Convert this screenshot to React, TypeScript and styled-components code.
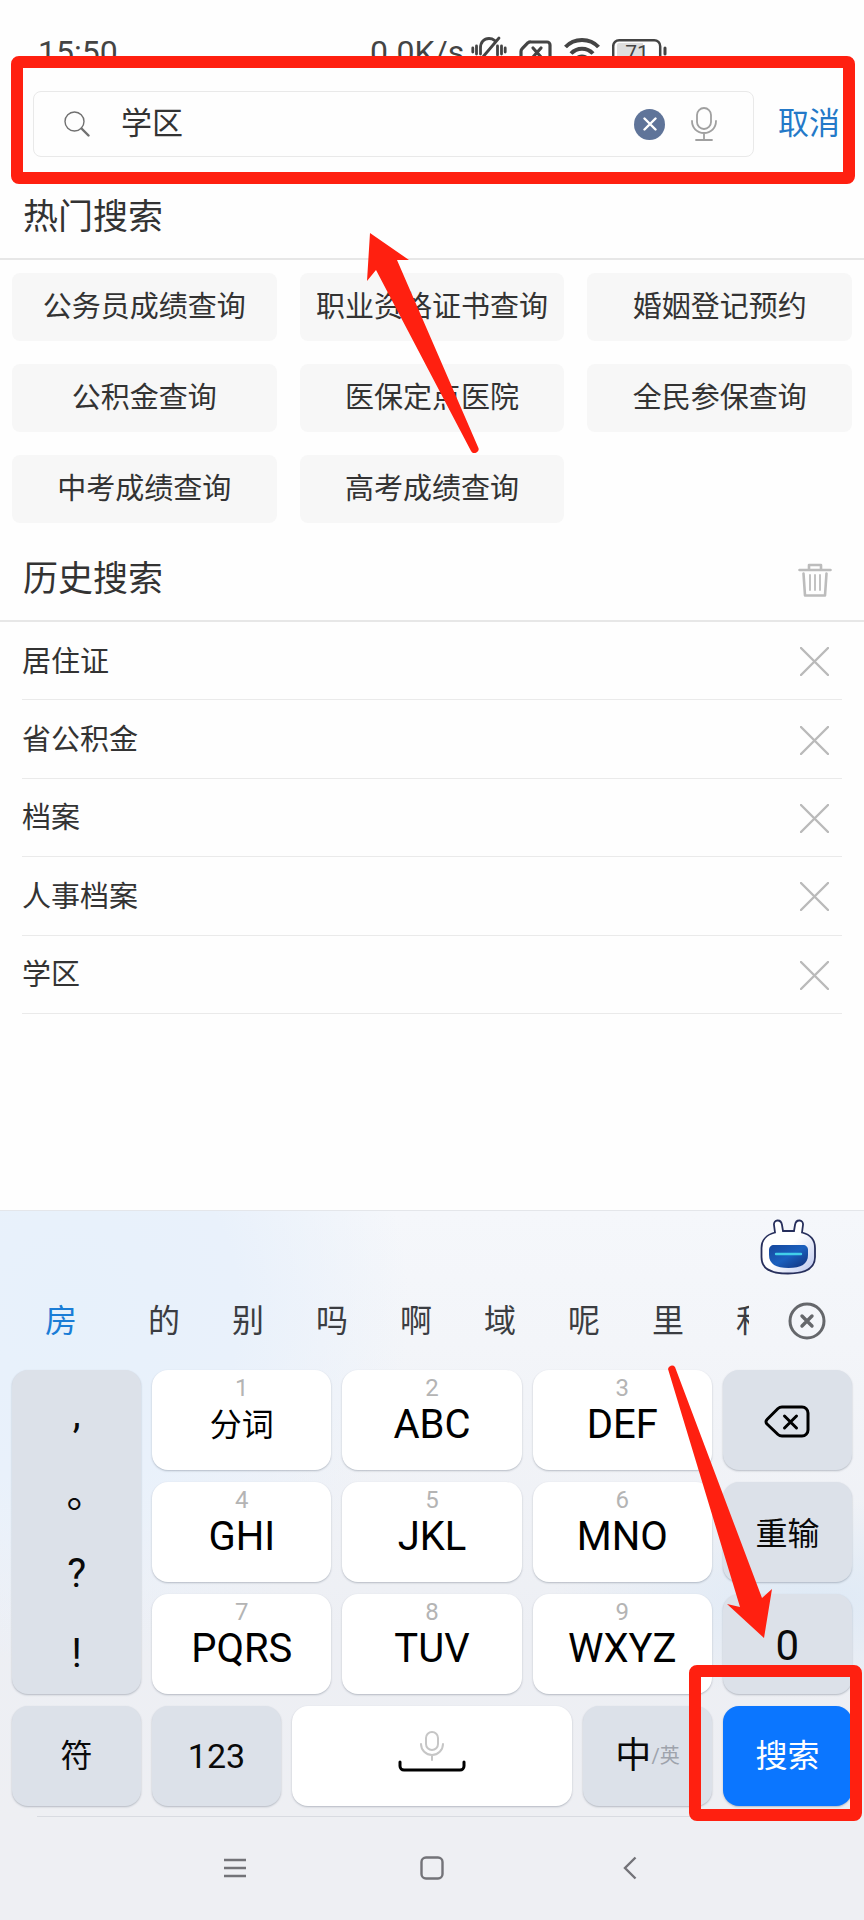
import React, { useState } from "react";
import styled, { createGlobalStyle } from "styled-components";

const RED = "#ff2010";

const GlobalStyle = createGlobalStyle`
  *, *::before, *::after { box-sizing: border-box; }
  body {
    margin: 0;
    background: #fefefe;
    color: #333;
    font-family: Roboto, "Noto Sans CJK SC", sans-serif;
  }
  button, input {
    margin: 0;
    padding: 0;
    border: 0;
    background: none;
    color: inherit;
    font: inherit;
  }
  button { cursor: pointer; }
  svg { display: block; flex: none; }
`;

const Screen = styled.div`
  display: flex;
  flex-direction: column;
  min-height: 100vh;
  overflow: hidden;
`;

/* ---------- status bar ---------- */

const StatusBar = styled.div`
  display: grid;
  grid-template-columns: 370fr 494fr;
  height: 56px;
  padding-top: 36px;
  color: #444;
  font-size: 32px;
  line-height: 32px;
`;

const Clock = styled.span`
  padding-left: 38px;
`;

const StatusIcons = styled.div`
  display: flex;
  align-items: flex-start;
  gap: 12px;
`;

const Speed = styled.span`
  width: 89px;
  white-space: nowrap;
`;

/* ---------- search ---------- */

const SearchHeader = styled.header`
  position: relative;
  display: flex;
  align-items: center;
  gap: 24px;
  padding: 35px 24px 27px 33px;
`;

const SearchBox = styled.label`
  display: flex;
  flex: 1;
  align-items: center;
  height: 66px;
  padding: 0 36px 0 30px;
  border: 1px solid #e9e9e9;
  border-radius: 8px;
`;

const SearchInput = styled.input`
  flex: 1;
  min-width: 0;
  padding: 0 30px 0 31px;
  outline: none;
  font-size: 31px;
  line-height: 40px;
`;

const ClearButton = styled.button`
  display: grid;
  place-items: center;
  width: 31px;
  height: 31px;
  margin-right: 26px;
  border-radius: 50%;
  background: #5f7499;
`;

const IconButton = styled.button`
  display: grid;
  place-items: center;
`;

const CancelButton = styled.button`
  color: #2479c8;
  font-size: 31px;
  line-height: 40px;
`;

const Highlight = styled.div<{ $inset: string }>`
  position: absolute;
  z-index: 2;
  inset: ${(p) => p.$inset};
  border: 12px solid ${RED};
  border-radius: 8px;
  pointer-events: none;
`;

const Arrow = styled.svg`
  position: absolute;
  z-index: 3;
  fill: ${RED};
  pointer-events: none;
`;

const HotArrow = styled(Arrow)`
  top: 49px;
  left: 366px;
`;

const KeyArrow = styled(Arrow)`
  top: 154px;
  right: 91px;
`;

/* ---------- sections ---------- */

const Section = styled.section`
  position: relative;
`;

const SectionHead = styled.div`
  display: flex;
  align-items: center;
  justify-content: space-between;
  padding: 0 32px 6px 23px;
  border-bottom: 2px solid #e7e7e7;
`;

const SectionTitle = styled.h2`
  margin: 0;
  font-size: 35px;
  font-weight: 400;
  line-height: 68px;
`;

const TagGrid = styled.div`
  display: grid;
  grid-template-columns: repeat(3, 1fr);
  gap: 23px;
  padding: 13px 12px 23px;
`;

const Tag = styled.button`
  height: 68px;
  border-radius: 8px;
  background: #f7f7f7;
  font-size: 29px;
  line-height: 40px;
  white-space: nowrap;
`;

const HistoryList = styled.ul`
  display: grid;
  grid-auto-rows: 1fr;
  min-height: 392px;
  margin: 0;
  padding: 0 22px;
  list-style: none;
`;

const HistoryRow = styled.li`
  display: flex;
  align-items: center;
  justify-content: space-between;
  padding: 2px 13px 0 0;
  border-bottom: 1px solid #eaeaea;
  font-size: 29px;
  line-height: 40px;
`;

/* ---------- keyboard ---------- */

const KeyboardArea = styled.div`
  margin-top: auto;
  background: #eeeff3;
`;

const Keyboard = styled.section`
  position: relative;
  border-top: 1px solid #e4e6ea;
  background:
    radial-gradient(ellipse 260px 100px at 94% 64%, #dfeaf6 0%, transparent 100%),
    radial-gradient(ellipse 340px 360px at 8% 16%, #e7f1fb 0%, #e9f1fb 50%, transparent 100%),
    linear-gradient(#f5f7fb 0%, #f3f5f9 22%, #edeff4 70%, #eeeff3 100%);
`;

const AssistantBar = styled.div`
  display: flex;
  justify-content: flex-end;
  height: 65px;
  padding: 7px 48px 0 0;
`;

const CandidateBar = styled.div`
  display: flex;
  align-items: center;
  height: 90px;
  padding-right: 38px;
`;

const Candidates = styled.div`
  display: flex;
  flex: 1;
  min-width: 0;
  margin-right: 39px;
  overflow: hidden;
`;

const Candidate = styled.button<{ $active?: boolean }>`
  flex: none;
  width: ${(p) => (p.$active ? 122 : 84)}px;
  color: ${(p) => (p.$active ? "#1a7dd6" : "#3b3d42")};
  font-size: 32px;
  line-height: 48px;
`;

const KeyRows = styled.div`
  display: grid;
  gap: 12px;
  padding: 4px 12px 10px;
`;

const MainKeys = styled.div`
  display: grid;
  grid-template-columns: 129fr 179fr 179fr 179fr 129fr;
  grid-auto-rows: 100px;
  gap: 12px 11px;
`;

const BottomKeys = styled.div`
  display: grid;
  grid-template-columns: 129fr 129fr 280fr 129fr 129fr;
  grid-auto-rows: 100px;
  gap: 11px;
`;

const keyTone = {
  white: { bg: "#fff", fg: "#000" },
  gray: { bg: "#dce1e9", fg: "#0a0a0a" },
  blue: { bg: "#0b76ff", fg: "#fff" },
};

const Key = styled.button<{ $tone: keyof typeof keyTone; $size?: number }>`
  display: flex;
  flex-direction: column;
  align-items: center;
  justify-content: center;
  width: 100%;
  height: 100%;
  border-radius: 16px;
  background: ${(p) => keyTone[p.$tone].bg};
  box-shadow: 0 1px 2px rgba(60, 70, 90, 0.32);
  color: ${(p) => keyTone[p.$tone].fg};
  font-size: ${(p) => p.$size ?? 32}px;
  line-height: 48px;
`;

const LetterKey = styled(Key)`
  justify-content: flex-start;
  padding-top: 6px;
`;

const SideKey = styled(Key)`
  padding-top: 4px;
`;

const SpaceKey = styled(Key)`
  gap: 0;
  padding-bottom: 8px;
`;

const Digit = styled.span`
  color: #b4b4b4;
  font-size: 24px;
  line-height: 24px;
`;

const Letters = styled.span`
  line-height: 50px;
`;

const PunctuationKeys = styled.div`
  display: grid;
  grid-row: span 3;
  grid-auto-rows: 1fr;
  padding-top: 4px;
  border-radius: 16px;
  background: #dce1e9;
  box-shadow: 0 1px 2px rgba(60, 70, 90, 0.32);
`;

const PunctuationKey = styled.button`
  color: #0a0a0a;
  font-size: 40px;
  line-height: 48px;
  font-feature-settings: "halt";
`;

const LanguageLabel = styled.span`
  display: flex;
  align-items: center;
`;

const LanguageAlt = styled.span`
  color: #9ea3ac;
  font-size: 20px;
`;

const KeyHolder = styled.div`
  position: relative;
`;

/* ---------- system navigation ---------- */

const NavBar = styled.nav`
  display: flex;
  justify-content: center;
  height: 104px;
  margin: 0 37px;
  padding-bottom: 2px;
  border-top: 1px solid #d9dbe1;
  color: #737378;
`;

const NavButton = styled.button`
  display: grid;
  place-items: center;
  width: 25%;
`;

/* ---------- icons ---------- */

const stroke = { fill: "none", strokeLinecap: "round", strokeLinejoin: "round" } as const;

const VibrateOffIcon = () => (
  <svg width="36" height="30" viewBox="0 0 36 30" {...stroke} stroke="#444" strokeWidth="2.8">
    <path d="M9.500 18V12C9.500 6 13 2.500 18 2.500c2 0 4 .6 5.500 1.800M26.500 10v9M11 22 28 2M1.800 12v4M5.500 10v8M30.500 10v8M34.200 12v4" />
    <path d="M12 24h15" />
  </svg>
);

const NoSimIcon = () => (
  <svg width="33" height="28" viewBox="0 0 33 28" {...stroke} stroke="#444" strokeWidth="3.2">
    <path d="M12 6h16a3 3 0 0 1 3 3v13a3 3 0 0 1-3 3H5a3 3 0 0 1-3-3v-6.500a4 4 0 0 1 1.200-2.800l5.800-6A4 4 0 0 1 12 6Z" />
    <path d="m14 12 8 9M22 12l-8 9" />
  </svg>
);

const WifiIcon = () => (
  <svg width="36" height="28" viewBox="0 0 36 28" fill="none" stroke="#444" strokeWidth="4">
    <path d="M1.500 11C10 1.500 26 1.500 34.500 11" />
    <path d="M7 17.500c6-6.500 16-6.500 22 0" />
    <path d="M12.500 23c3-3.500 8-3.500 11 0" />
  </svg>
);

const BatteryIcon = () => (
  <svg width="56" height="28" viewBox="0 0 56 28">
    <path d="M7 7h24v17H7a2 2 0 0 1-2-2V9a2 2 0 0 1 2-2Z" fill="#dedede" />
    <rect x="1.200" y="4.200" width="47" height="23" rx="6" fill="none" stroke="#444" strokeWidth="2.500" />
    <path d="M53 12v6" stroke="#444" strokeWidth="3" strokeLinecap="round" />
    <text x="25" y="24" textAnchor="middle" fill="#444" fontSize="21" fontFamily="Roboto, sans-serif">
      71
    </text>
  </svg>
);

const SearchIcon = () => (
  <svg width="26" height="26" viewBox="0 0 26 26" {...stroke} stroke="#707070">
    <circle cx="10.500" cy="10.500" r="9.500" strokeWidth="1.400" />
    <path d="m17.500 17.500 7 7" strokeWidth="2.400" />
  </svg>
);

const MicIcon = ({ width, height, color, weight }: { width: number; height: number; color: string; weight: number }) => (
  <svg width={width} height={height} viewBox="0 0 26 34" {...stroke} stroke={color} strokeWidth={weight}>
    <rect x="6" y="1" width="14" height="21" rx="7" />
    <path d="M1 14c0 7 5 12 12 12s12-5 12-12M13 26v7M5 33h16" />
  </svg>
);

const SpaceIcon = () => (
  <svg width="68" height="42" viewBox="0 0 68 42" {...stroke}>
    <g stroke="#c6c6c6" strokeWidth="2">
      <rect x="28" y="1" width="12" height="18" rx="6" />
      <path d="M23 13c0 6 5 11 11 11s11-5 11-11M34 24v5" />
    </g>
    <path d="M2 31v4a4 4 0 0 0 4 4h56a4 4 0 0 0 4-4v-4" stroke="#000" strokeWidth="3" />
  </svg>
);

const TrashIcon = () => (
  <svg width="34" height="34" viewBox="0 0 34 34" {...stroke} stroke="#bcbcbc" strokeWidth="2.600">
    <path d="M1.500 7h31M11 6V2h12v4M5.500 10.500l1.500 22h20l1.500-22" />
    <path d="M12 12v15M17 12v15M22 12v15" strokeWidth="1.800" />
  </svg>
);

const RemoveIcon = () => (
  <svg width="29" height="29" viewBox="0 0 29 29" {...stroke} stroke="#bababa" strokeWidth="2.400">
    <path d="m1 1 27 27M28 1 1 28" />
  </svg>
);

const RobotIcon = () => (
  <svg width="56" height="56" viewBox="0 0 56 56">
    <defs>
      <linearGradient id="robotHead" x1="0" y1="0" x2="1" y2="1">
        <stop offset="0.5" stopColor="#fff" />
        <stop offset="1" stopColor="#b8c4ee" />
      </linearGradient>
      <linearGradient id="robotFace" x1="0" y1="0" x2="1" y2="1">
        <stop offset="0" stopColor="#17489c" />
        <stop offset="0.5" stopColor="#1a5fbe" />
        <stop offset="1" stopColor="#122f78" />
      </linearGradient>
    </defs>
    <path
      d="M15 13.500 14 6c-.7-5.500 7-6.500 8 0l1 6h11l1-6c1-6.500 8.700-5.500 8 0l-1 7.500c8 2 13 7.500 13 15.500v9c0 11-8 16.500-27 16.500S1.500 49 1.500 38v-9c0-8 5.500-13.500 13.500-15.500Z"
      fill="url(#robotHead)"
      stroke="#272f5c"
      strokeWidth="1.800"
    />
    <path d="M14 26h29c3 0 5 2 5 5v5c0 9-7 13-19.500 13S9 45 9 36v-5c0-3 2-5 5-5Z" fill="url(#robotFace)" />
    <path d="M16 35h25" stroke="#42cfe9" strokeWidth="2.400" strokeLinecap="round" />
  </svg>
);

const CloseCircleIcon = () => (
  <svg width="38" height="38" viewBox="0 0 38 38" {...stroke} stroke="#65676b">
    <circle cx="19" cy="19" r="17" strokeWidth="3" />
    <path d="m14 14 10 10M24 14 14 24" strokeWidth="3.400" />
  </svg>
);

const BackspaceIcon = () => (
  <svg width="46" height="34" viewBox="0 0 46 34" {...stroke} stroke="#000" strokeWidth="3">
    <path d="M18 2h20a6 6 0 0 1 6 6v17a6 6 0 0 1-6 6H18a6 6 0 0 1-4-1.500L3 19a3 3 0 0 1 0-4.500L14 3.500A6 6 0 0 1 18 2Z" />
    <path d="m20.500 11 12 12M32.500 11l-12 12" />
  </svg>
);

/* ---------- data ---------- */

const hotSearches = [
  "公务员成绩查询",
  "职业资格证书查询",
  "婚姻登记预约",
  "公积金查询",
  "医保定点医院",
  "全民参保查询",
  "中考成绩查询",
  "高考成绩查询",
];

const candidates = ["房", "的", "别", "吗", "啊", "域", "呢", "里", "和"];

const letterRows = [
  [["1", "分词"], ["2", "ABC"], ["3", "DEF"]],
  [["4", "GHI"], ["5", "JKL"], ["6", "MNO"]],
  [["7", "PQRS"], ["8", "TUV"], ["9", "WXYZ"]],
];

const sideKeys = [
  <SideKey key="delete" $tone="gray" aria-label="删除">
    <BackspaceIcon />
  </SideKey>,
  <SideKey key="reset" $tone="gray">重输</SideKey>,
  <SideKey key="zero" $tone="gray" $size={42}>0</SideKey>,
];

export default function App() {
  const [query, setQuery] = useState("学区");
  const [history, setHistory] = useState(["居住证", "省公积金", "档案", "人事档案", "学区"]);

  return (
    <Screen>
      <GlobalStyle />
      <StatusBar>
        <Clock>15:50</Clock>
        <StatusIcons>
          <Speed>0.0K/s</Speed>
          <VibrateOffIcon />
          <NoSimIcon />
          <WifiIcon />
          <BatteryIcon />
        </StatusIcons>
      </StatusBar>

      <SearchHeader>
        <SearchBox>
          <SearchIcon />
          <SearchInput aria-label="搜索" value={query} onChange={(e) => setQuery(e.target.value)} />
          <ClearButton aria-label="清空" onClick={() => setQuery("")}>
            <svg width="14" height="14" viewBox="0 0 14 14" {...stroke} stroke="#fff" strokeWidth="2.400">
              <path d="m1.500 1.500 11 11M12.500 1.500l-11 11" />
            </svg>
          </ClearButton>
          <IconButton aria-label="语音搜索">
            <MicIcon width={26} height={34} color="#a0a0a0" weight={1.8} />
          </IconButton>
        </SearchBox>
        <CancelButton>取消</CancelButton>
        <Highlight $inset="0 9px 0 11px" />
      </SearchHeader>

      <Section>
        <SectionHead>
          <SectionTitle>热门搜索</SectionTitle>
        </SectionHead>
        <TagGrid>
          {hotSearches.map((name) => (
            <Tag key={name}>{name}</Tag>
          ))}
        </TagGrid>
        <HotArrow width="114" height="220" viewBox="0 0 114 220">
          <path d="M4 0 43 27 31 27 112 214a4 4 0 0 1-7 4L10 37 1 48Z" />
        </HotArrow>
      </Section>

      <Section>
        <SectionHead>
          <SectionTitle>历史搜索</SectionTitle>
          <IconButton aria-label="清空历史" onClick={() => setHistory([])}>
            <TrashIcon />
          </IconButton>
        </SectionHead>
        <HistoryList>
          {history.map((item) => (
            <HistoryRow key={item}>
              {item}
              <IconButton
                aria-label={`删除 ${item}`}
                onClick={() => setHistory(history.filter((other) => other !== item))}
              >
                <RemoveIcon />
              </IconButton>
            </HistoryRow>
          ))}
        </HistoryList>
      </Section>

      <KeyboardArea>
        <Keyboard>
          <AssistantBar>
            <IconButton aria-label="助手">
              <RobotIcon />
            </IconButton>
          </AssistantBar>
          <CandidateBar>
            <Candidates>
              {candidates.map((word, i) => (
                <Candidate key={word} $active={i === 0}>
                  {word}
                </Candidate>
              ))}
            </Candidates>
            <IconButton aria-label="关闭候选">
              <CloseCircleIcon />
            </IconButton>
          </CandidateBar>
          <KeyRows>
            <MainKeys>
              <PunctuationKeys>
                {[",", "。", "?", "!"].map((mark) => (
                  <PunctuationKey key={mark}>{mark}</PunctuationKey>
                ))}
              </PunctuationKeys>
              {letterRows.map((row, i) => (
                <React.Fragment key={i}>
                  {row.map(([digit, letters]) => (
                    <LetterKey key={digit} $tone="white" $size={digit === "1" ? 32 : 40}>
                      <Digit>{digit}</Digit>
                      <Letters>{letters}</Letters>
                    </LetterKey>
                  ))}
                  {sideKeys[i]}
                </React.Fragment>
              ))}
            </MainKeys>
            <BottomKeys>
              <Key $tone="gray">符</Key>
              <Key $tone="gray" $size={34}>123</Key>
              <SpaceKey $tone="white" aria-label="空格">
                <SpaceIcon />
              </SpaceKey>
              <Key $tone="gray" $size={36}>
                <LanguageLabel>
                  中<LanguageAlt>/英</LanguageAlt>
                </LanguageLabel>
              </Key>
              <KeyHolder>
                <Key $tone="blue">搜索</Key>
                <Highlight $inset="-41px -10px -15px -34px" />
              </KeyHolder>
            </BottomKeys>
          </KeyRows>
          <KeyArrow width="107" height="274" viewBox="0 0 107 274">
            <path d="M2 4a4 4 0 0 1 7-2L96 233 106 224 98 273 61 239 74 242Z" />
          </KeyArrow>
        </Keyboard>
        <NavBar>
          <NavButton aria-label="菜单">
            <svg width="22" height="22" viewBox="0 0 22 22" stroke="currentColor" strokeWidth="2.400">
              <path d="M0 3h22M0 11h22M0 19h22" />
            </svg>
          </NavButton>
          <NavButton aria-label="主页">
            <svg width="24" height="24" viewBox="0 0 24 24" fill="none" stroke="currentColor" strokeWidth="2.400">
              <rect x="1.500" y="1.500" width="21" height="21" rx="4.500" />
            </svg>
          </NavButton>
          <NavButton aria-label="返回">
            <svg width="14" height="24" viewBox="0 0 14 24" fill="none" stroke="currentColor" strokeWidth="2.400">
              <path d="M12.500 1.500 2 12l10.500 10.500" />
            </svg>
          </NavButton>
        </NavBar>
      </KeyboardArea>
    </Screen>
  );
}
